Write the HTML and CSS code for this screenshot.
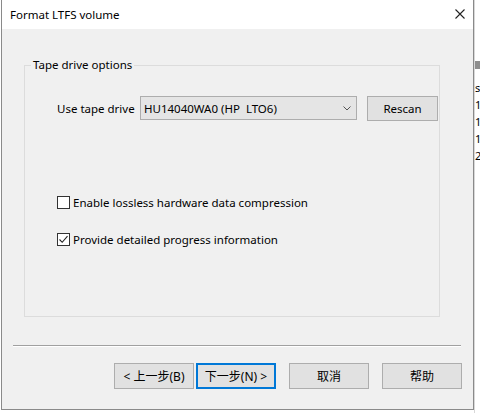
FILE: index.html
```html
<!DOCTYPE html>
<html>
<head>
<meta charset="utf-8">
<title>Format LTFS volume</title>
<link rel="stylesheet" href="styles.css">
</head>
<body>
<div class="screen">
  <div class="dialog">
    <div class="titlebar">
      <span class="title">Format LTFS volume</span>
      <svg class="close" width="10" height="10" viewBox="0 0 10 10"><path d="M0.5 0.5 L9.5 9.5 M9.5 0.5 L0.5 9.5" stroke="#222" stroke-width="1.1" fill="none"/></svg>
    </div>
    <div class="content">
      <fieldset class="group">
        <legend class="legend">Tape drive options</legend>
        <div class="drive-row">
          <span class="drive-label">Use tape drive</span>
          <div class="combo">
            <span class="combo-text">HU14040WA0 (HP&nbsp;&nbsp;LTO6)</span>
            <svg class="chev" width="8" height="5" viewBox="0 0 8 5"><path d="M0.5 0.5 L4 4 L7.5 0.5" stroke="#555" stroke-width="1" fill="none"/></svg>
          </div>
          <div class="btn rescan">Rescan</div>
        </div>
        <div class="checks">
          <label class="check"><span class="box"></span><span>Enable lossless hardware data compression</span></label>
          <label class="check"><span class="box"><svg width="11" height="11" viewBox="0 0 11 11"><path d="M1.5 5.5 L4.2 8.3 L9.5 2.2" stroke="#222" stroke-width="1.1" fill="none"/></svg></span><span>Provide detailed progress information</span></label>
        </div>
      </fieldset>
      <div class="separator"></div>
      <div class="buttons">
        <div class="btn nav">&lt; 上一步(B)</div>
        <div class="btn nav default">下一步(N) &gt;</div>
        <div class="btn nav cancel">取消</div>
        <div class="btn nav help">帮助</div>
      </div>
    </div>
  </div>
  <div class="behind">
    <div class="behind-top"></div>
    <div class="behind-head"></div>
    <div class="behind-gap"></div>
    <div class="behind-row">s</div>
    <div class="behind-row">1</div>
    <div class="behind-row">1</div>
    <div class="behind-row">1</div>
    <div class="behind-row">2</div>
  </div>
</div>
</body>
</html>
```
FILE: styles.css
```css
html, body {
  margin: 0;
  padding: 0;
  background: #ffffff;
  width: 480px;
  height: 413px;
  overflow: hidden;
}
body {
  font-family: "Noto Sans", "Noto Sans CJK SC", sans-serif;
  font-size: 11.5px;
  color: #000;
}
.screen {
  display: flex;
  align-items: flex-start;
  height: 413px;
}
.dialog {
  margin-left: 1px;
  width: 471px;
  height: 409px;
  border: 1px solid #8a8a8a;
  border-top: none;
  background: #f0f0f0;
  display: flex;
  flex-direction: column;
}
.titlebar {
  height: 29px;
  background: #ffffff;
  display: flex;
  align-items: center;
  justify-content: space-between;
  padding: 0 8px 0 8px;
}
.title {
  color: #000;
  margin-top: -1px;
}
.close {
  margin-top: -1px;
}
.content {
  flex: 1;
  display: flex;
  flex-direction: column;
}
.group {
  margin: 29px 33px 0 22px;
  height: 259px;
  box-sizing: border-box;
  border: 1px solid #dcdcdc;
  padding: 0 0 0 32px;
  min-width: 0;
}
.legend {
  padding: 0 2px;
  margin-left: -26px;
  line-height: 14px;
}
.drive-row {
  display: flex;
  align-items: center;
  margin-top: 24px;
}
.drive-label {
  width: 83px;
  flex: none;
}
.combo {
  width: 217px;
  height: 24px;
  box-sizing: border-box;
  border: 1px solid #adadad;
  background: #e5e5e5;
  display: flex;
  align-items: center;
  justify-content: space-between;
  padding: 0 5px 0 3px;
  align-self: flex-start;
}
.combo-text {
  white-space: pre;
}
.chev {
  margin-top: 1px;
}
.btn {
  box-sizing: border-box;
  border: 1px solid #adadad;
  background: #e1e1e1;
  display: flex;
  align-items: center;
  justify-content: center;
  white-space: pre;
}
.rescan {
  width: 71px;
  height: 25px;
  margin-left: 10px;
  align-self: flex-start;
}
.checks {
  display: flex;
  flex-direction: column;
  gap: 21px;
  margin-top: 73px;
}
.check {
  display: flex;
  align-items: center;
  height: 16px;
}
.box {
  width: 13px;
  height: 13px;
  box-sizing: border-box;
  border: 1px solid #333;
  background: #fff;
  margin-right: 3px;
  display: flex;
  align-items: center;
  justify-content: center;
  flex: none;
}
.box svg {
  display: block;
}
.separator {
  margin: 28px 0 0 11px;
  width: 448px;
  height: 0;
  border-top: 1px solid #a0a0a0;
  border-bottom: 1px solid #ffffff;
}
.buttons {
  display: flex;
  margin: 16px 0 0 112px;
}
.nav {
  width: 80px;
  height: 26px;
  font-size: 12px;
}
.default {
  margin-left: 2px;
  border: 2px solid #0078d7;
}
.cancel, .help {
  margin-left: 13px;
}
.behind {
  flex: 1;
  height: 413px;
  overflow: hidden;
  background: #ffffff;
  font-size: 11px;
  display: flex;
  flex-direction: column;
  border-left: 1px solid #d8d8d8;
}
.behind-top {
  height: 61px;
  flex: none;
}
.behind-head {
  height: 8px;
  background: #8e8e8e;
  flex: none;
}
.behind-gap {
  height: 10px;
  flex: none;
}
.behind-row {
  height: 17px;
  line-height: 17px;
  flex: none;
  color: #000;
  white-space: nowrap;
  overflow: hidden;
}
```
